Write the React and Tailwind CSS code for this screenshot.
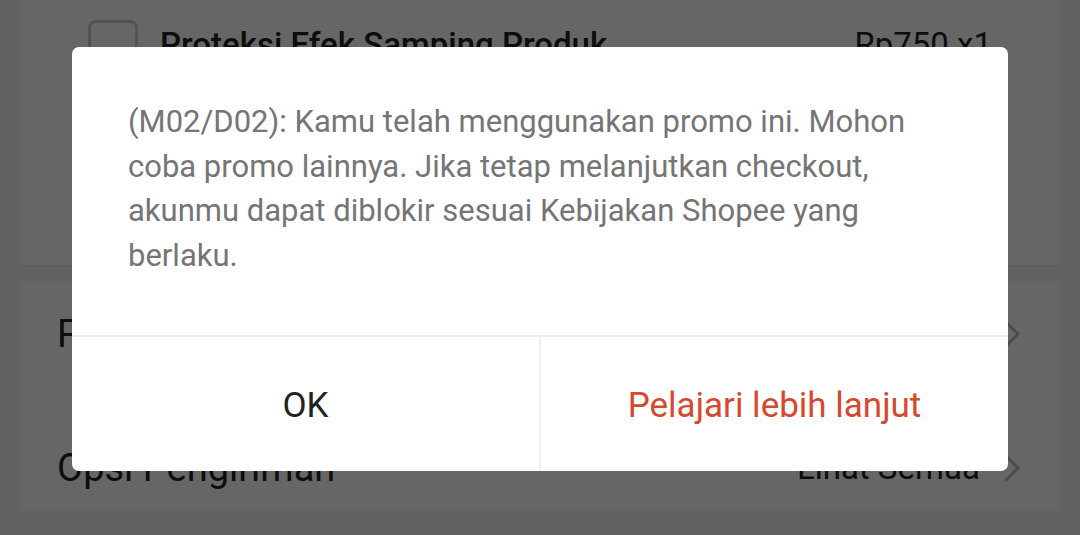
import { ChevronRight } from 'lucide-react';

const App = () => {
  return (
    <div className="relative w-[1080px] h-[535px] overflow-hidden bg-[#f5f5f5] font-['Roboto',sans-serif]">
      {/* page behind the dialog */}
      <div className="flex flex-col px-[20px]">
        <div className="h-[266px] bg-white border-b border-[#e8e8e8]">
          <div className="flex items-center pl-[68px] pr-[68px] pt-[20px]">
            <div className="w-[50px] h-[50px] rounded-[8px] border-[3px] border-[#cfcfcf]"></div>
            <span className="ml-[22px] text-[33px] font-medium text-[#222]">Proteksi Efek Samping Produk</span>
            <span className="ml-auto text-[33px] text-[#222]">Rp750 x1</span>
          </div>
        </div>
        <div className="mt-[16px] bg-white h-[228px]">
          <div className="flex items-center h-[104px] pl-[37px] pr-[24px]">
            <span className="text-[38px] text-[#222]">Proteksi</span>
            <ChevronRight className="ml-auto text-[#bbb]" size={48} strokeWidth={1.5} />
          </div>
          <div className="flex items-center h-[164px] pl-[37px] pr-[24px]">
            <span className="text-[38px] text-[#222]">Opsi Pengiriman</span>
            <span className="ml-auto text-[33px] text-[#222]">Lihat Semua</span>
            <ChevronRight className="ml-[8px] text-[#bbb]" size={48} strokeWidth={1.5} />
          </div>
        </div>
      </div>

      {/* dim overlay */}
      <div className="absolute inset-0 bg-black/60"></div>

      {/* dialog */}
      <div className="absolute left-[72px] top-[47px] w-[936px] h-[424px] bg-white rounded-[7px] overflow-hidden flex flex-col">
        <div className="px-[56px] pt-[53px] h-[290px] border-b-[2px] border-[#efefef]">
          <p className="text-[31px] leading-[44.5px] text-[#757575]">
            (M02/D02): Kamu telah menggunakan promo ini. Mohon coba promo lainnya. Jika tetap melanjutkan checkout, akunmu dapat diblokir sesuai Kebijakan Shopee yang berlaku.
          </p>
        </div>
        <div className="flex flex-1">
          <button className="flex-1 flex items-center justify-center pt-[4px] text-[35px] text-[#222] border-r-[2px] border-[#efefef]">
            OK
          </button>
          <button className="flex-1 flex items-center justify-center pt-[4px] text-[35px] text-[#d5492f]">
            Pelajari lebih lanjut
          </button>
        </div>
      </div>
    </div>
  );
};

export default App;
